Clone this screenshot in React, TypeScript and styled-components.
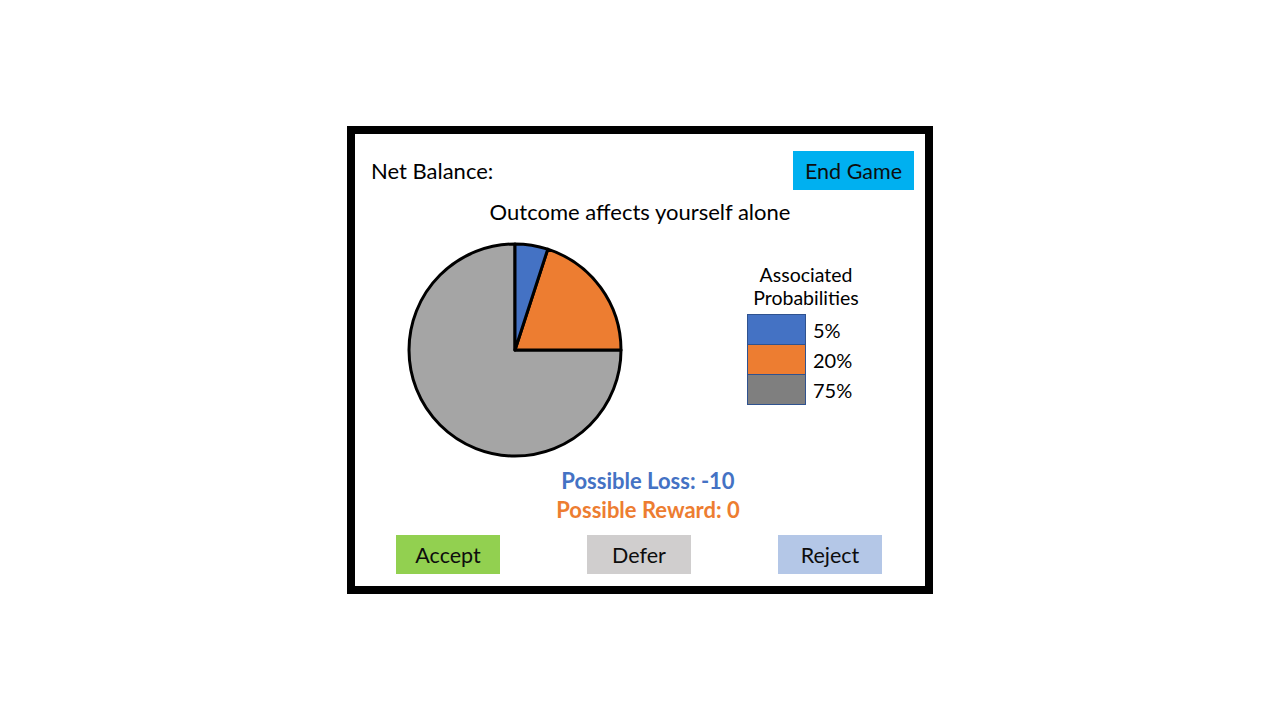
import React from "react";
import styled, { createGlobalStyle } from "styled-components";

const Global = createGlobalStyle`
  html, body { margin: 0; padding: 0; background: #ffffff; }
  body { font-family: "Lato", "Open Sans", sans-serif; color: #000; }
`;

const Page = styled.div`
  width: 1280px;
  height: 720px;
  display: flex;
  align-items: center;
  justify-content: center;
`;

const Frame = styled.div`
  box-sizing: border-box;
  width: 586px;
  height: 468px;
  border: 8px solid #000;
  background: #fff;
  display: flex;
  flex-direction: column;
`;

const Header = styled.div`
  display: flex;
  align-items: center;
  justify-content: space-between;
  margin-top: 17px;
  padding: 0 11px 0 16px;
`;

const Label = styled.span`
  font-size: 22px;
  line-height: 24px;
`;

const Btn = styled.div<{ $bg: string }>`
  width: 104px;
  height: 39px;
  background: ${(p) => p.$bg};
  display: flex;
  align-items: center;
  justify-content: center;
  font-size: 21.5px;
  color: #0d0d0d;
`;

const EndBtn = styled(Btn)`
  width: 121px;
`;

const Title = styled.div`
  margin-top: 10px;
  text-align: center;
  font-size: 22px;
  line-height: 24px;
`;

const Middle = styled.div`
  display: flex;
  margin-top: 16px;
  padding-left: 50px;
`;

const PieSvg = styled.svg`
  display: block;
  width: 220px;
  height: 220px;
  flex: none;
`;

const Legend = styled.div`
  margin-left: 121px;
  margin-top: 23px;
  width: 120px;
  display: flex;
  flex-direction: column;
`;

const LegendTitle = styled.div`
  text-align: center;
  font-size: 19.5px;
  line-height: 23px;
  margin-bottom: 5px;
`;

const Row = styled.div`
  display: flex;
  align-items: center;
  padding-left: 1px;
`;

const Swatch = styled.div<{ $c: string; $first?: boolean }>`
  box-sizing: border-box;
  width: 59px;
  background: ${(p) => p.$c};
  border: 1px solid #2f528f;
  border-top-width: ${(p) => (p.$first ? "1px" : "0")};
  height: ${(p) => (p.$first ? "31px" : "30px")};
`;

const Pct = styled.span`
  margin-left: 7px;
  font-size: 20px;
`;

const Amounts = styled.div`
  margin-top: 6px;
  padding-left: 16px;
  display: flex;
  flex-direction: column;
  align-items: center;
`;

const Amount = styled.div<{ $c: string }>`
  color: ${(p) => p.$c};
  font-weight: 700;
  font-size: 22px;
  line-height: 29px;
`;

const Buttons = styled.div`
  display: flex;
  justify-content: space-between;
  margin-top: 11px;
  padding: 0 43px 0 41px;
`;

export default function App() {
  const r = 106;
  const c = 110;
  const a = (18 * Math.PI) / 180;
  const bx = c + r * Math.sin(a);
  const by = c - r * Math.cos(a);
  return (
    <>
      <Global />
      <Page>
        <Frame>
          <Header>
            <Label>Net Balance:</Label>
            <EndBtn $bg="#00b0f0">End Game</EndBtn>
          </Header>
          <Title>Outcome affects yourself alone</Title>
          <Middle>
            <PieSvg viewBox="0 0 220 220">
              <g stroke="#000" strokeWidth={3} strokeLinejoin="round">
                <path
                  d={`M${c},${c} L${c + r},${c} A${r},${r} 0 1 1 ${c},${c - r} Z`}
                  fill="#a5a5a5"
                />
                <path
                  d={`M${c},${c} L${bx},${by} A${r},${r} 0 0 1 ${c + r},${c} Z`}
                  fill="#ed7d31"
                />
                <path
                  d={`M${c},${c} L${c},${c - r} A${r},${r} 0 0 1 ${bx},${by} Z`}
                  fill="#4472c4"
                />
              </g>
            </PieSvg>
            <Legend>
              <LegendTitle>
                Associated
                <br />
                Probabilities
              </LegendTitle>
              <Row>
                <Swatch $c="#4472c4" $first />
                <Pct>5%</Pct>
              </Row>
              <Row>
                <Swatch $c="#ed7d31" />
                <Pct>20%</Pct>
              </Row>
              <Row>
                <Swatch $c="#7f7f7f" />
                <Pct>75%</Pct>
              </Row>
            </Legend>
          </Middle>
          <Amounts>
            <Amount $c="#4472c4">Possible Loss: -10</Amount>
            <Amount $c="#ed7d31">Possible Reward: 0</Amount>
          </Amounts>
          <Buttons>
            <Btn $bg="#92d050">Accept</Btn>
            <Btn $bg="#d0cece">Defer</Btn>
            <Btn $bg="#b4c7e7">Reject</Btn>
          </Buttons>
        </Frame>
      </Page>
    </>
  );
}
